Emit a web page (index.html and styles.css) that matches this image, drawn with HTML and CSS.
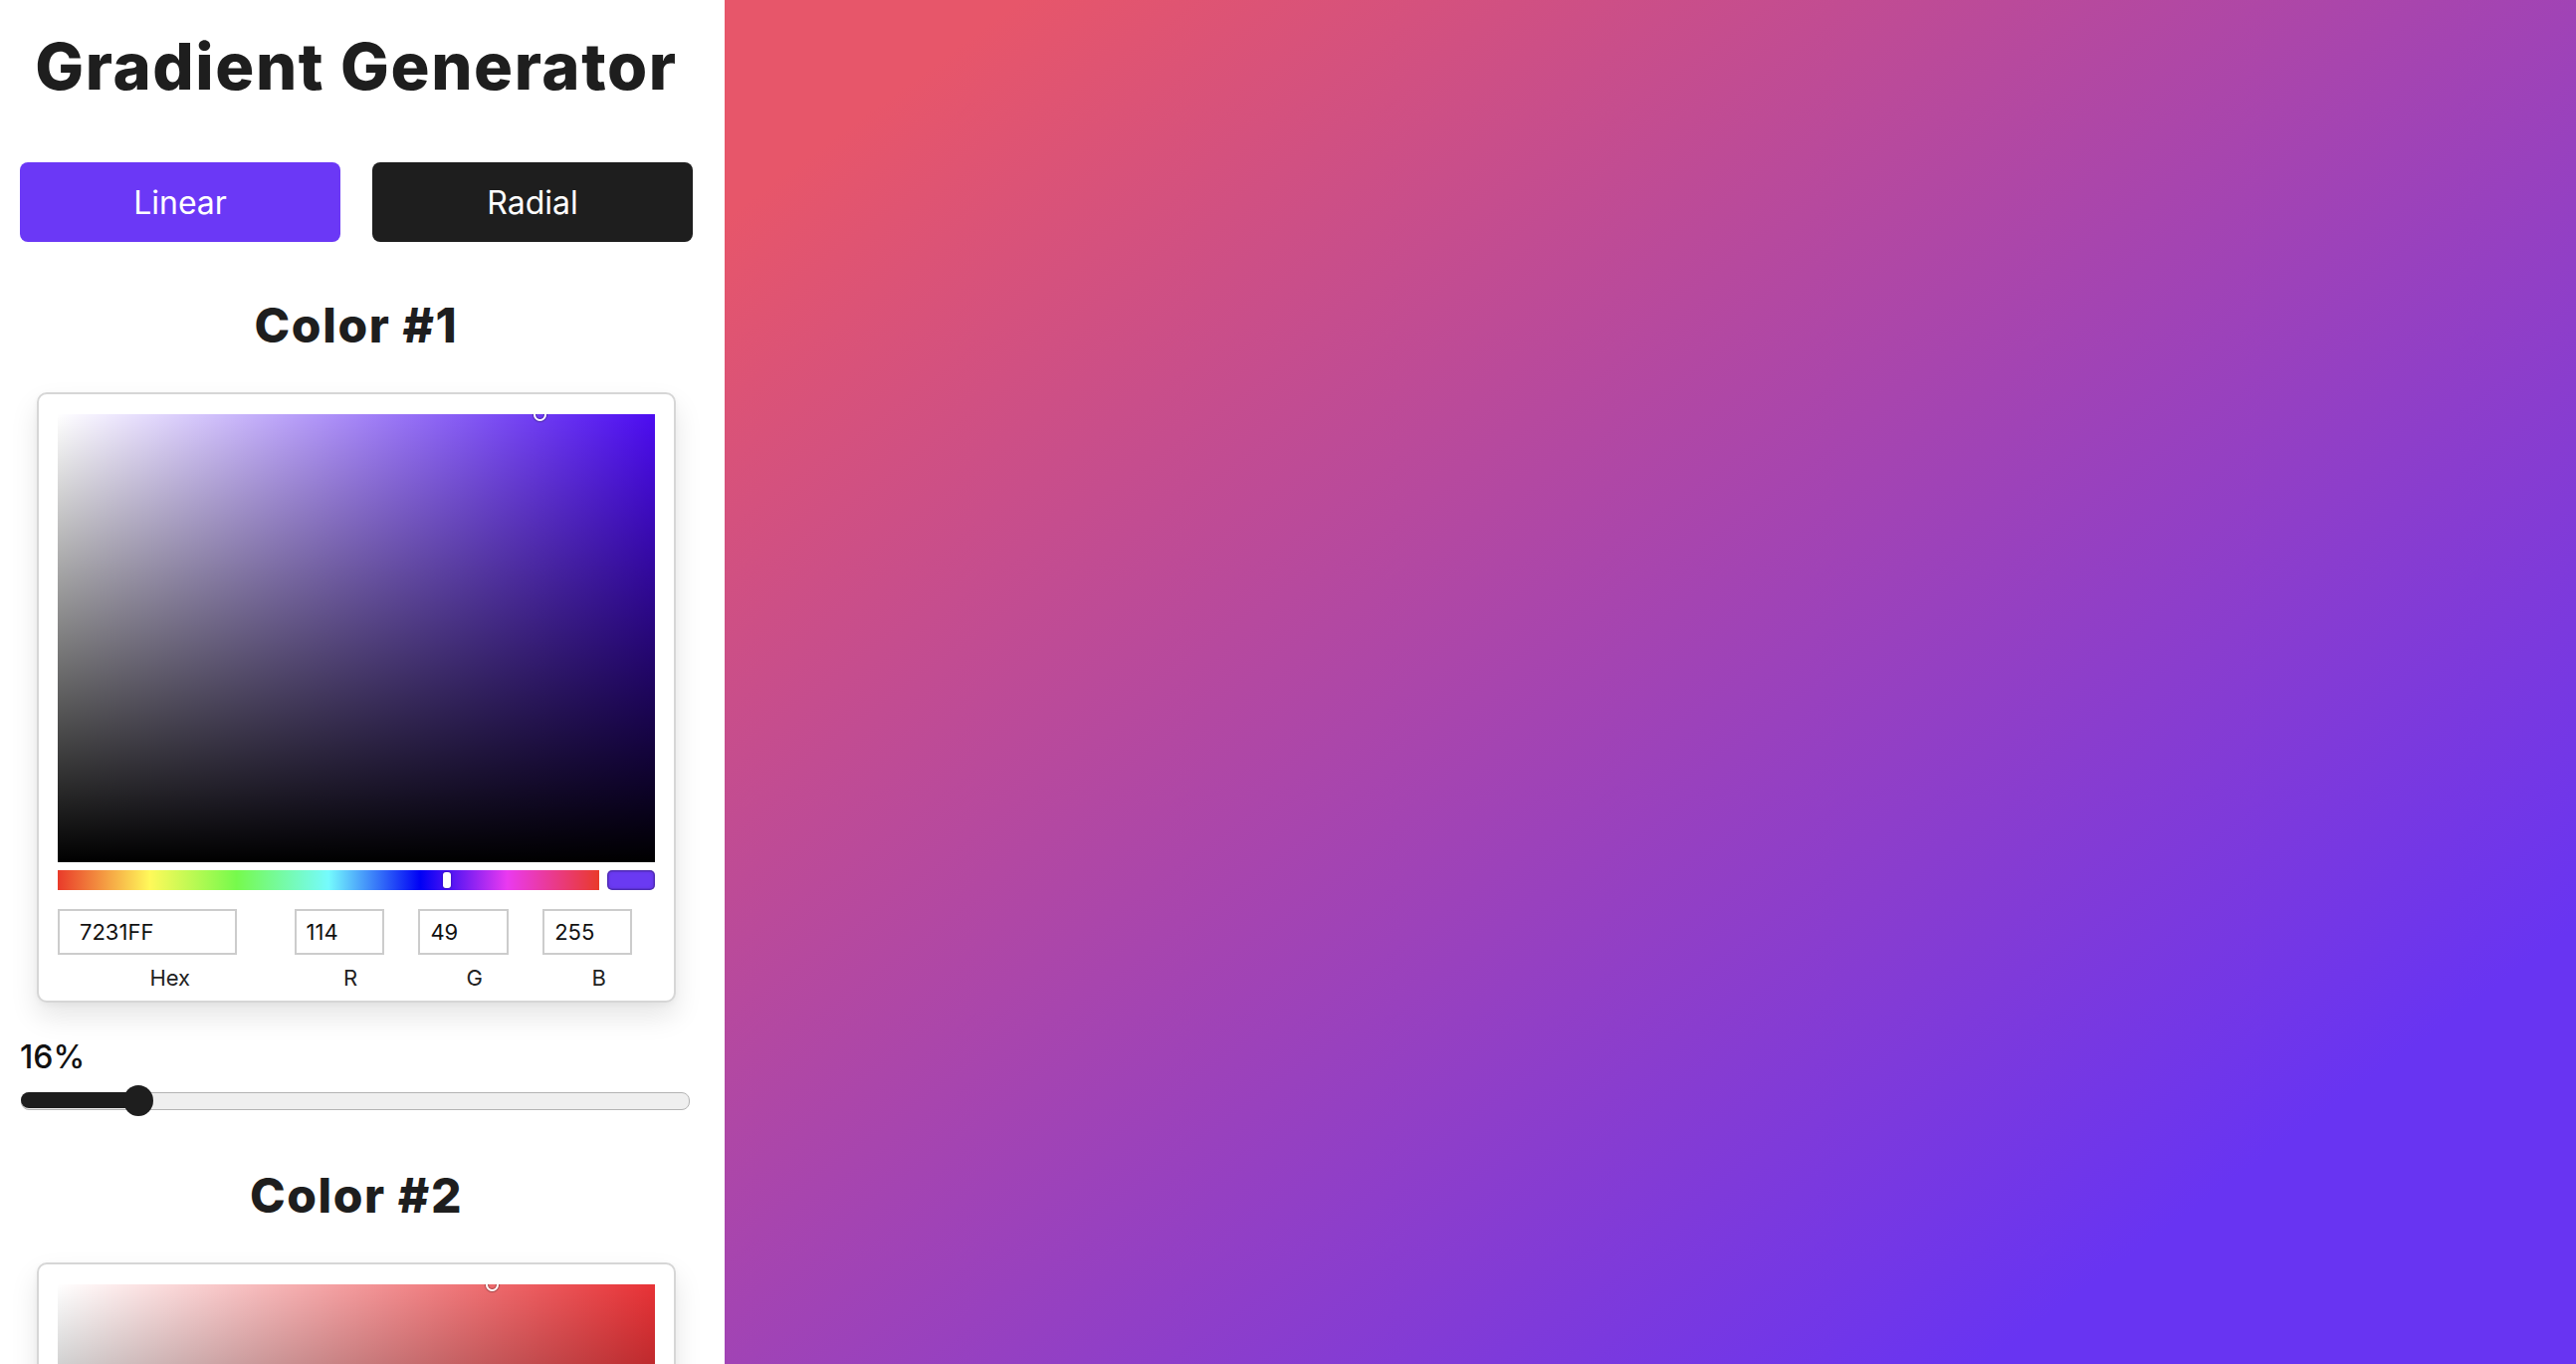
FILE: index.html
```html
<!DOCTYPE html>
<html lang="en">
<head>
<meta charset="utf-8">
<title>Gradient Generator</title>
<link rel="stylesheet" href="styles.css">
</head>
<body>
<div class="app">
  <aside class="sidebar">
    <h1 class="title">Gradient Generator</h1>
    <div class="mode-row">
      <button class="mode-btn mode-btn--active">Linear</button>
      <button class="mode-btn">Radial</button>
    </div>

    <section class="color-block">
      <h2 class="color-title">Color #1</h2>
      <div class="picker">
        <div class="sat sat--one">
          <span class="sat-pointer" style="--s: 0.808; --v: 1"></span>
        </div>
        <div class="hue-row">
          <div class="hue"><span class="hue-pointer" style="--h: 0.719"></span></div>
          <div class="swatch swatch--one"></div>
        </div>
        <div class="fields">
          <div class="field field--double"><input class="field-input field-input--hex" value="7231FF"><span class="field-label">Hex</span></div>
          <div class="field"><input class="field-input" value="114"><span class="field-label">R</span></div>
          <div class="field"><input class="field-input" value="49"><span class="field-label">G</span></div>
          <div class="field"><input class="field-input" value="255"><span class="field-label">B</span></div>
        </div>
      </div>
      <div class="stop">
        <div class="stop-value">16%</div>
        <div class="range" style="--p: 0.16">
          <div class="range-fill"></div>
          <span class="range-thumb"></span>
        </div>
      </div>
    </section>

    <section class="color-block color-block--second">
      <h2 class="color-title">Color #2</h2>
      <div class="picker">
        <div class="sat sat--two">
          <span class="sat-pointer" style="--s: 0.727; --v: 1"></span>
        </div>
      </div>
    </section>
  </aside>
  <main class="preview"></main>
</div>
</body>
</html>
```

FILE: styles.css
```css
* { box-sizing: border-box; }

html, body {
  margin: 0;
  padding: 0;
  height: 100%;
}

body {
  font-family: Inter, "Noto Sans", "Liberation Sans", sans-serif;
  color: #1e1e1e;
  background: #fff;
  overflow: hidden;
}

.app {
  display: flex;
  height: 100vh;
}

.sidebar {
  width: 728px;
  flex: 0 0 728px;
  height: 100vh;
  overflow: hidden;
  padding: 35px 32px 0 20px;
  background: #fff;
}

.title {
  margin: 0;
  font-size: 65px;
  line-height: 64px;
  font-weight: 800;
  text-align: center;
  color: #1e1e1e;
  letter-spacing: 1.6px;
  white-space: nowrap;
}

.mode-row {
  display: flex;
  gap: 32px;
  margin-top: 64px;
}

.mode-btn {
  flex: 1;
  height: 80px;
  border: none;
  border-radius: 8px;
  background: #1e1e1e;
  color: #fff;
  font-family: inherit;
  font-size: 32px;
  font-weight: 400;
  cursor: pointer;
}

.mode-btn--active {
  background: #6b38f6;
}

.color-block {
  margin-top: 60px;
}

.color-block--second {
  margin-top: 56px;
}

.color-title {
  margin: 0;
  font-size: 48px;
  line-height: 48px;
  font-weight: 800;
  text-align: center;
  color: #1e1e1e;
  letter-spacing: 1.6px;
}

.picker {
  width: 642px;
  margin: 43px auto 0;
  padding: 20px 19px 10px;
  border: 2px solid #d6d6d6;
  border-radius: 10px;
  background: #fff;
  box-shadow: 0 14px 28px rgba(0, 0, 0, 0.10), 0 2px 6px rgba(0, 0, 0, 0.04);
}

.sat {
  position: relative;
  height: 450px;
  overflow: hidden;
}

.sat--one {
  background:
    linear-gradient(to top, #000, rgba(0, 0, 0, 0)),
    linear-gradient(to right, #fff, rgba(255, 255, 255, 0)),
    #4c0cf1;
}

.sat--two {
  background:
    linear-gradient(to top, #000, rgba(0, 0, 0, 0)),
    linear-gradient(to right, #fff, rgba(255, 255, 255, 0)),
    #e83236;
}

.sat-pointer {
  position: absolute;
  left: calc(var(--s) * 100%);
  top: calc((1 - var(--v)) * 100%);
  width: 13px;
  height: 13px;
  margin: -6.5px 0 0 -6.5px;
  border-radius: 50%;
  border: 2.5px solid #fff;
  box-shadow: 0 0 1px 1px rgba(0, 0, 0, 0.3), inset 0 0 1px 1px rgba(0, 0, 0, 0.3);
}

.hue-row {
  display: flex;
  gap: 8px;
  margin-top: 8px;
  height: 20px;
}

.hue {
  position: relative;
  flex: 1;
  background: linear-gradient(to right,
    #e93a2a 0%, #fff95a 17%, #76fa4c 33%, #75fbfd 50%, #0000f5 67%, #ea3af0 83%, #e93a2a 100%);
}

.hue-pointer {
  position: absolute;
  top: 2px;
  left: calc(var(--h) * 100%);
  width: 8px;
  height: 16px;
  margin-left: -4px;
  border-radius: 3px;
  background: #fff;
  box-shadow: 0 0 2px rgba(0, 0, 0, 0.5);
}

.swatch {
  flex: 0 0 48px;
  border-radius: 5px;
  box-shadow: inset 0 0 0 1.5px rgba(0, 0, 0, 0.18), inset 0 0 4px rgba(0, 0, 0, 0.2);
}

.swatch--one { background: #6a3af2; }

.fields {
  display: flex;
  gap: 12px;
  margin-top: 19px;
}

.field {
  flex: 1;
  display: flex;
  flex-direction: column;
  min-width: 0;
}

.field--double {
  flex: 2;
}

.field-input {
  width: 80%;
  height: 46px;
  border: 2px solid #cccccc;
  padding: 0 0 0 10px;
  font-family: inherit;
  font-size: 22px;
  color: #111;
  background: #fff;
  outline: none;
}

.field-input--hex {
  padding-left: 20px;
}

.field-label {
  margin-top: 10px;
  font-size: 22px;
  line-height: 26px;
  text-align: center;
  color: #222;
}

.stop {
  margin-top: 39px;
}

.stop-value {
  font-size: 32px;
  line-height: 32px;
  font-weight: 500;
  color: #111;
}

.range {
  position: relative;
  height: 31px;
  margin: 12px 3px 0 1px;
}

.range::before {
  content: "";
  position: absolute;
  left: 0;
  right: 0;
  top: 7px;
  height: 16px;
  border-radius: 8px;
  background: #efefef;
  border: 1.5px solid #b4b4b4;
}

.range-fill {
  position: absolute;
  left: 0;
  top: 7px;
  height: 16px;
  width: calc(15px + var(--p) * (100% - 30px));
  border-radius: 8px 0 0 8px;
  background: #1e1e1e;
}

.range-thumb {
  position: absolute;
  top: 0;
  left: calc(var(--p) * (100% - 30px));
  width: 30px;
  height: 31px;
  border-radius: 50%;
  background: #1e1e1e;
}

.preview {
  flex: 1;
  height: 100vh;
  background: linear-gradient(to top left, #6834f2 16%, #e7566a 92%);
}
```
